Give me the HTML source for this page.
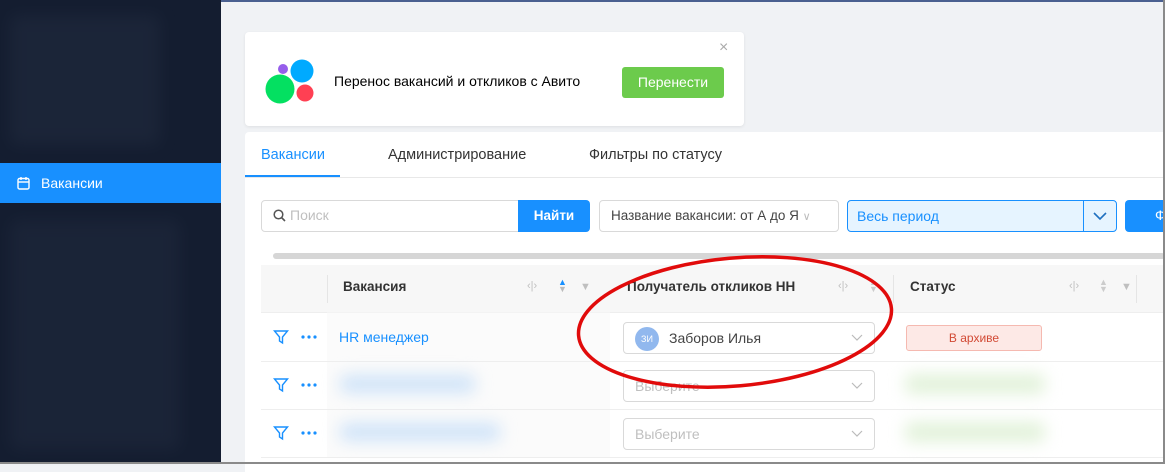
<!DOCTYPE html><html><head><meta charset="utf-8"><style>
*{box-sizing:border-box;margin:0;padding:0}
body{width:1165px;height:464px;overflow:hidden;background:#f0f2f5;font-family:"Liberation Sans",sans-serif;position:relative;font-size:14px;color:#262626}
.a{position:absolute}
.sb{left:0;top:0;width:221px;height:464px;background:#141d30}
.blur{position:absolute;background:#2a3448;filter:blur(8px);border-radius:6px}
.card{background:#fff;border-radius:4px}
.ic{color:#bfbfbf;font-size:11px}
</style></head><body>
<div class="a" style="left:0;top:0;width:1165px;height:2px;background:#4a6090"></div>
<div class="a sb">
<div class="blur" style="left:10px;top:15px;width:150px;height:130px;opacity:.35"></div>
<div class="blur" style="left:10px;top:220px;width:170px;height:230px;opacity:.3"></div>
</div>
<div class="a" style="left:0;top:163px;width:221px;height:40px;background:#1890ff;color:#fff;font-size:14px;line-height:40px;padding-left:41px">Вакансии</div>
<svg class="a" style="left:17px;top:176px" width="13" height="14" viewBox="0 0 13 14"><rect x="1" y="2.5" width="11" height="10.5" rx="1.5" fill="none" stroke="#fff" stroke-width="1.4"/><line x1="1" y1="6" x2="12" y2="6" stroke="#fff" stroke-width="1.4"/><line x1="4" y1="1" x2="4" y2="4" stroke="#fff" stroke-width="1.4"/><line x1="9" y1="1" x2="9" y2="4" stroke="#fff" stroke-width="1.4"/></svg>

<div class="a card" style="left:245px;top:32px;width:499px;height:94px;box-shadow:0 1px 3px rgba(0,0,0,.08)"></div>
<svg class="a" style="left:263px;top:58px" width="54" height="46"><circle cx="20" cy="11" r="5" fill="#965eeb"/><circle cx="39" cy="13" r="11.5" fill="#00aaff"/><circle cx="17" cy="31" r="14.5" fill="#04e061"/><circle cx="42" cy="35" r="8.5" fill="#ff4053"/></svg>
<div class="a" style="left:334px;top:73px;font-size:14px;color:#000">Перенос вакансий и откликов с Авито</div>
<div class="a" style="left:622px;top:67px;width:102px;height:31px;background:#6ccb4c;border-radius:3px;color:#fff;text-align:center;line-height:31px;font-size:14px">Перенести</div>
<div class="a" style="left:719px;top:39px;color:#aaa;font-size:16px">×</div>

<div class="a card" style="left:245px;top:132px;width:930px;height:340px;border-radius:4px 0 0 0"></div>
<div class="a" style="left:245px;top:177px;width:920px;height:1px;background:#e8e8e8"></div>
<div class="a" style="left:245px;top:175px;width:95px;height:2px;background:#1890ff"></div>
<div class="a" style="left:261px;top:147px;color:#1890ff;font-size:14.5px">Вакансии</div>
<div class="a" style="left:388px;top:147px;color:#333;font-size:14.5px">Администрирование</div>
<div class="a" style="left:589px;top:147px;color:#333;font-size:14.5px">Фильтры по статусу</div>

<div class="a" style="left:261px;top:200px;width:258px;height:32px;border:1px solid #d9d9d9;border-radius:4px 0 0 4px"></div>
<svg class="a" style="left:273px;top:209px" width="13" height="13"><circle cx="5.5" cy="5.5" r="4.3" fill="none" stroke="#555" stroke-width="1.5"/><line x1="8.5" y1="8.5" x2="12" y2="12" stroke="#555" stroke-width="1.6"/></svg>
<div class="a" style="left:290px;top:207px;color:#bfbfbf">Поиск</div>
<div class="a" style="left:518px;top:200px;width:72px;height:32px;background:#1890ff;border-radius:0 4px 4px 0;color:#fff;text-align:center;line-height:32px;font-weight:bold;font-size:13.5px">Найти</div>
<div class="a" style="left:599px;top:200px;width:240px;height:32px;border:1px solid #d9d9d9;border-radius:4px;padding:7px 11px;color:#444;font-size:13.5px">Название вакансии: от А до Я <span style="color:#bbb;font-size:11px">&#8744;</span></div>
<div class="a" style="left:847px;top:200px;width:270px;height:32px;border:1px solid #1890ff;border-radius:4px;background:#e6f4ff;padding:7px 9px;color:#1890ff;font-size:14px">Весь период</div>
<div class="a" style="left:1083px;top:201px;width:1px;height:30px;background:#1890ff"></div>
<svg class="a" style="left:1093px;top:212px" width="14" height="9"><path d="M1 1L7 7L13 1" fill="none" stroke="#1f70c0" stroke-width="1.6"/></svg>
<div class="a" style="left:1125px;top:200px;width:45px;height:32px;background:#1890ff;border-radius:4px;color:#fff;padding:7px 0 0 30px">Ф</div>

<div class="a" style="left:273px;top:253px;width:892px;height:6px;background:#d6d6d6;border-radius:3px"></div>
<div class="a" style="left:261px;top:265px;width:904px;height:48px;background:#f7f7f7;border-bottom:1px solid #eee"></div>
<div class="a" style="left:327px;top:265px;width:283px;height:192px;background:#f7f7f7;opacity:.5"></div>
<div class="a" style="left:327px;top:275px;width:1px;height:28px;background:#e5e5e5"></div>
<div class="a" style="left:893px;top:275px;width:1px;height:28px;background:#e5e5e5"></div>
<div class="a" style="left:1136px;top:275px;width:1px;height:28px;background:#e5e5e5"></div>
<div class="a" style="left:343px;top:279px;font-weight:bold;font-size:13.5px;color:#333">Вакансия</div>
<div class="a" style="left:627px;top:279px;font-weight:bold;font-size:13.5px;color:#333">Получатель откликов НН</div>
<div class="a" style="left:910px;top:279px;font-weight:bold;font-size:13.5px;color:#333">Статус</div>
<div class="a ic" style="left:527px;top:280px">&#8249;|&#8250;</div><div class="a" style="left:558px;top:279px;font-size:9px;line-height:7px;color:#1890ff">▲<br><span style="color:#bbb">▼</span></div><div class="a ic" style="left:580px;top:281px">▼</div>
<div class="a ic" style="left:838px;top:280px">&#8249;|&#8250;</div><div class="a" style="left:869px;top:279px;font-size:9px;line-height:7px;color:#ccc">▲<br>▼</div>
<div class="a ic" style="left:1069px;top:280px">&#8249;|&#8250;</div><div class="a" style="left:1099px;top:279px;font-size:9px;line-height:7px;color:#ccc">▲<br>▼</div><div class="a ic" style="left:1121px;top:281px">▼</div>

<div class="a" style="left:261px;top:361px;width:904px;height:1px;background:#eee"></div>
<div class="a" style="left:261px;top:409px;width:904px;height:1px;background:#eee"></div>
<div class="a" style="left:261px;top:457px;width:904px;height:1px;background:#eee"></div>

<svg class="a" style="left:273px;top:329px" width="16" height="16"><path d="M1.5 2H14.5L9.5 8V14L6.5 12V8Z" fill="none" stroke="#1890ff" stroke-width="1.4"/></svg>
<svg class="a" style="left:273px;top:377px" width="16" height="16"><path d="M1.5 2H14.5L9.5 8V14L6.5 12V8Z" fill="none" stroke="#1890ff" stroke-width="1.4"/></svg>
<svg class="a" style="left:273px;top:425px" width="16" height="16"><path d="M1.5 2H14.5L9.5 8V14L6.5 12V8Z" fill="none" stroke="#1890ff" stroke-width="1.4"/></svg>
<svg class="a" style="left:301px;top:335px" width="16" height="4"><circle cx="2" cy="2" r="1.6" fill="#1890ff"/><circle cx="8" cy="2" r="1.6" fill="#1890ff"/><circle cx="14" cy="2" r="1.6" fill="#1890ff"/></svg>
<svg class="a" style="left:301px;top:383px" width="16" height="4"><circle cx="2" cy="2" r="1.6" fill="#1890ff"/><circle cx="8" cy="2" r="1.6" fill="#1890ff"/><circle cx="14" cy="2" r="1.6" fill="#1890ff"/></svg>
<svg class="a" style="left:301px;top:431px" width="16" height="4"><circle cx="2" cy="2" r="1.6" fill="#1890ff"/><circle cx="8" cy="2" r="1.6" fill="#1890ff"/><circle cx="14" cy="2" r="1.6" fill="#1890ff"/></svg>
<div class="a" style="left:339px;top:329px;color:#1890ff">HR менеджер</div>
<div class="blur" style="left:340px;top:375px;width:135px;height:18px;background:#cfe3f8"></div>
<div class="blur" style="left:340px;top:423px;width:160px;height:18px;background:#cfe3f8"></div>

<div class="a" style="left:623px;top:322px;width:252px;height:32px;border:1px solid #d9d9d9;border-radius:4px"></div>
<div class="a" style="left:635px;top:327px;width:24px;height:24px;border-radius:50%;background:#91b8ee;color:#fff;font-size:9px;text-align:center;line-height:24px">ЗИ</div>
<div class="a" style="left:669px;top:330px;color:#444">Заборов Илья</div>
<div class="a" style="left:623px;top:370px;width:252px;height:32px;border:1px solid #d9d9d9;border-radius:4px;padding:7px 11px;color:#bfbfbf">Выберите</div>
<div class="a" style="left:623px;top:418px;width:252px;height:32px;border:1px solid #d9d9d9;border-radius:4px;padding:7px 11px;color:#bfbfbf">Выберите</div>
<svg class="a" style="left:851px;top:334px" width="12" height="8"><path d="M1 1L6 6L11 1" fill="none" stroke="#bbb" stroke-width="1.2"/></svg>
<svg class="a" style="left:851px;top:382px" width="12" height="8"><path d="M1 1L6 6L11 1" fill="none" stroke="#bbb" stroke-width="1.2"/></svg>
<svg class="a" style="left:851px;top:430px" width="12" height="8"><path d="M1 1L6 6L11 1" fill="none" stroke="#bbb" stroke-width="1.2"/></svg>

<div class="a" style="left:906px;top:325px;width:136px;height:26px;background:#fde9e6;border:1px solid #f5b9b0;border-radius:3px;color:#d24a35;font-size:12px;text-align:center;line-height:24px">В архиве</div>
<div class="blur" style="left:905px;top:374px;width:140px;height:20px;background:#e2f2da"></div>
<div class="blur" style="left:905px;top:422px;width:140px;height:20px;background:#e2f2da"></div>

<svg class="a" style="left:560px;top:245px" width="350" height="160"><ellipse cx="175" cy="77" rx="157" ry="64" transform="rotate(-5 175 77)" fill="none" stroke="#e10b0b" stroke-width="3.5"/></svg>

<div class="a" style="left:1163px;top:0;width:2px;height:464px;background:#8a8a8a"></div>
<div class="a" style="left:0;top:462px;width:1165px;height:2px;background:#8a8a8a"></div>
</body></html>
